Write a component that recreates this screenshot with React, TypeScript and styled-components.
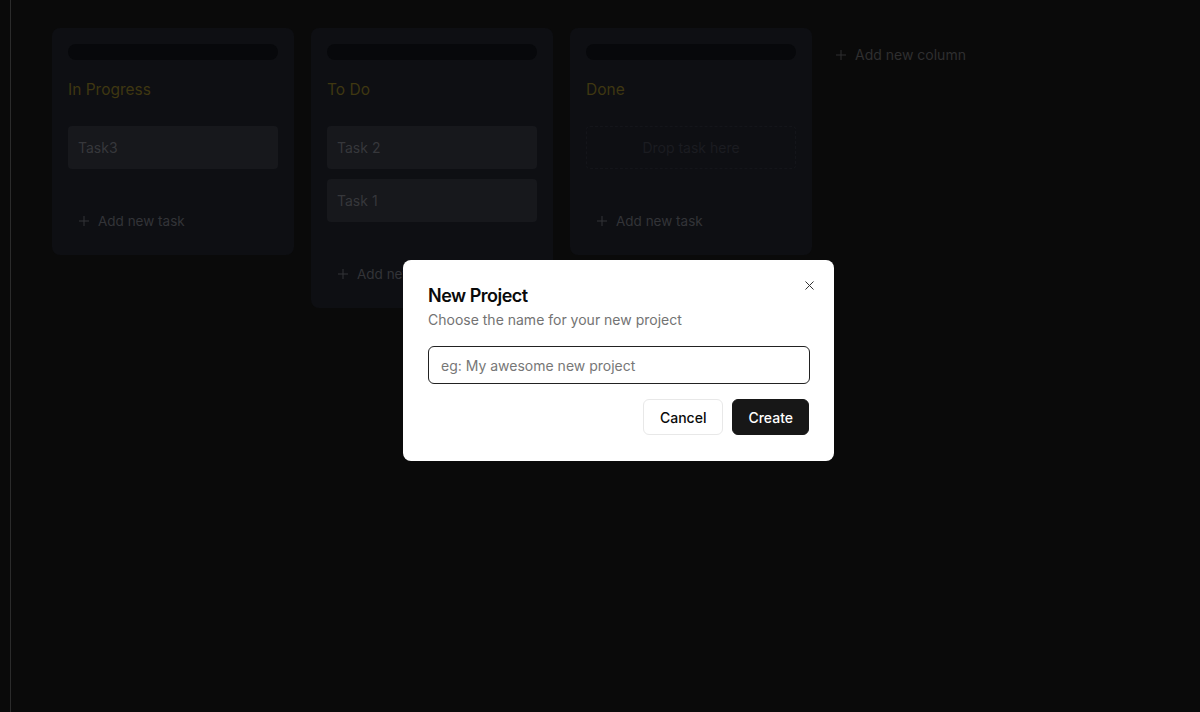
import styled, { createGlobalStyle } from "styled-components";
import { Plus, X } from "lucide-react";

const GlobalStyle = createGlobalStyle`
  html, body {
    margin: 0;
    padding: 0;
    background: #0a0a0a;
    font-family: Inter, "Noto Sans", sans-serif;
  }
  * { box-sizing: border-box; }
`;

const Page = styled.div`
  display: flex;
  height: 712px;
  overflow: hidden;
`;

const Rail = styled.div`
  width: 11px;
  flex-shrink: 0;
  border-right: 1px solid #2b2b2b;
`;

const Board = styled.div`
  display: flex;
  align-items: flex-start;
  gap: 17px;
  padding: 28px 0 0 41px;
`;

const Column = styled.div`
  width: 242px;
  background: #0e0f13;
  border-radius: 8px;
  padding: 16px 16px 0;
  display: flex;
  flex-direction: column;
`;

const Handle = styled.div`
  height: 16px;
  border-radius: 999px;
  background: #07080b;
`;

const ColumnTitle = styled.h3`
  margin: 20px 0 0;
  font-size: 15.5px;
  font-weight: 400;
  color: #3f3711;
  line-height: 20px;
`;

const TaskList = styled.div`
  display: flex;
  flex-direction: column;
  gap: 10px;
  margin-top: 26px;
`;

const Task = styled.div`
  height: 43px;
  background: #17181c;
  border-radius: 4px;
  padding: 0 10px;
  display: flex;
  align-items: center;
  font-size: 14px;
  color: #36373b;
`;

const DropZone = styled.div`
  height: 43px;
  border: 1px dashed #14151a;
  border-radius: 4px;
  display: flex;
  align-items: center;
  justify-content: center;
  font-size: 14px;
  color: #1b1c21;
`;

const AddButton = styled.button`
  display: flex;
  align-items: center;
  gap: 6px;
  margin: 40px 0 22px;
  padding: 4px 8px;
  background: none;
  border: none;
  font: inherit;
  font-size: 13.5px;
  color: #333438;
  cursor: pointer;
`;

const AddColumn = styled(AddButton)`
  margin: 14px 0 0 -4px;
  font-size: 14px;
  color: #2f2f30;
`;

const Overlay = styled.div`
  position: fixed;
  inset: 0;
  display: flex;
  align-items: center;
  justify-content: center;
  padding: 9px 0 0 37px;
`;

const Dialog = styled.div`
  position: relative;
  width: 431px;
  background: #ffffff;
  border-radius: 8px;
  padding: 25px 25px 26px;
  display: flex;
  flex-direction: column;
`;

const CloseButton = styled.button`
  position: absolute;
  top: 16px;
  right: 15px;
  background: none;
  border: none;
  padding: 2px;
  color: #333;
  display: flex;
  cursor: pointer;
`;

const DialogTitle = styled.h2`
  margin: 0;
  font-size: 18px;
  font-weight: 600;
  letter-spacing: -0.5px;
  color: #0a0a0a;
  line-height: 22px;
`;

const DialogText = styled.p`
  margin: 3px 0 0;
  font-size: 14px;
  color: #737373;
  line-height: 20px;
`;

const Input = styled.input`
  margin-top: 16px;
  height: 38px;
  width: calc(100% + 1px);
  border: 1.5px solid #222;
  border-radius: 6px;
  padding: 0 12px;
  font: inherit;
  font-size: 14px;
  color: #111;
  caret-color: #111;
  outline: none;
  &::placeholder { color: #777; }
`;

const Actions = styled.div`
  display: flex;
  justify-content: flex-end;
  gap: 9px;
  margin-top: 15px;
`;

const Button = styled.button<{ $primary?: boolean }>`
  height: 36px;
  padding: 0 ${(p) => (p.$primary ? "15px" : "16px")};
  border-radius: 6px;
  font: inherit;
  font-size: 14px;
  font-weight: 500;
  cursor: pointer;
  border: 1px solid ${(p) => (p.$primary ? "#171717" : "#e8e8e8")};
  background: ${(p) => (p.$primary ? "#171717" : "#ffffff")};
  color: ${(p) => (p.$primary ? "#ffffff" : "#0a0a0a")};
`;

const columns = [
  { title: "In Progress", tasks: ["Task3"] },
  { title: "To Do", tasks: ["Task 2", "Task 1"] },
  { title: "Done", tasks: [] as string[] },
];

export default function App() {
  return (
    <>
      <GlobalStyle />
      <Page>
        <Rail />
        <Board>
          {columns.map((col) => (
            <Column key={col.title}>
              <Handle />
              <ColumnTitle>{col.title}</ColumnTitle>
              <TaskList>
                {col.tasks.length ? (
                  col.tasks.map((t) => <Task key={t}>{t}</Task>)
                ) : (
                  <DropZone>Drop task here</DropZone>
                )}
              </TaskList>
              <AddButton>
                <Plus size={16} strokeWidth={1.5} />
                Add new task
              </AddButton>
            </Column>
          ))}
          <AddColumn>
            <Plus size={16} strokeWidth={1.5} />
            Add new column
          </AddColumn>
        </Board>
      </Page>
      <Overlay>
        <Dialog>
          <CloseButton aria-label="Close">
            <X size={15} strokeWidth={1.6} />
          </CloseButton>
          <DialogTitle>New Project</DialogTitle>
          <DialogText>Choose the name for your new project</DialogText>
          <Input placeholder="eg: My awesome new project" autoFocus />
          <Actions>
            <Button>Cancel</Button>
            <Button $primary>Create</Button>
          </Actions>
        </Dialog>
      </Overlay>
    </>
  );
}
